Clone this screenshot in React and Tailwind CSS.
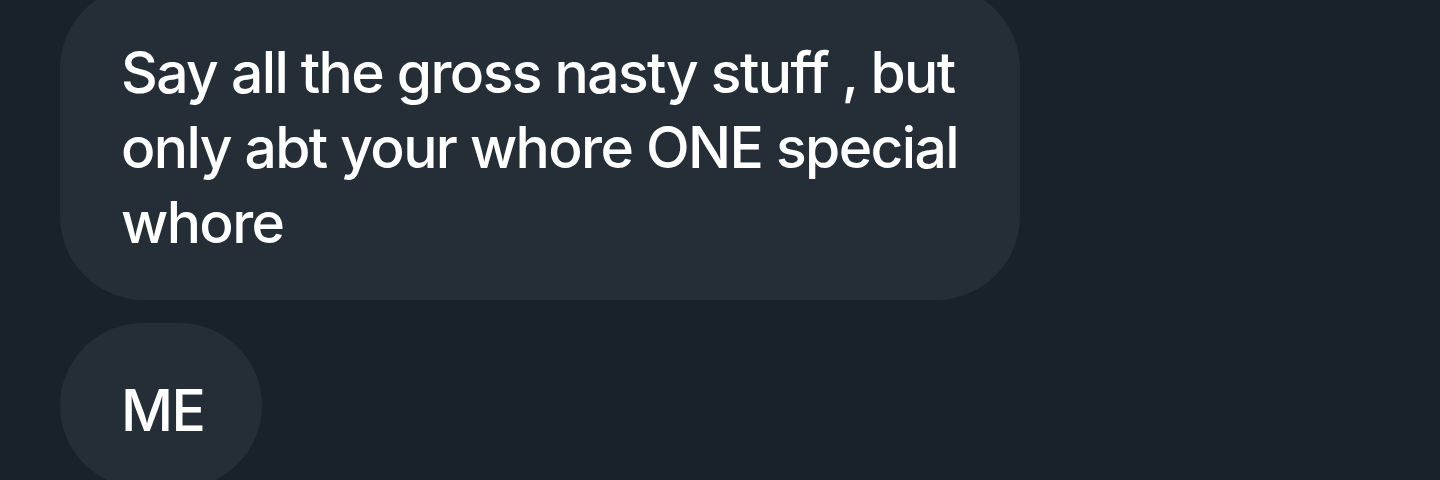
import React from 'react';

const messages = [
  {
    id: 1,
    wide: true,
    lines: ['Say all the gross nasty stuff , but', 'only abt your whore ONE special', 'whore'],
  },
  { id: 2, lines: ['ME'] },
];

const Bubble = ({ lines, wide }) => (
  <div
    className={
      'self-start rounded-[84px] bg-[#252e37] pl-[61px] pr-[58px] pt-[50px] pb-[40px] text-[57px] leading-[75px] font-medium tracking-[-1.6px] text-white ' +
      (wide ? 'w-[960px]' : '')
    }
  >
    {lines.map((l, i) => (
      <div key={i} className="whitespace-nowrap">
        {l}
      </div>
    ))}
  </div>
);

const App = () => (
  <div
    className="h-[480px] w-[1440px] overflow-hidden bg-[#19212a]"
    style={{ fontFamily: 'Inter, "Liberation Sans", sans-serif' }}
  >
    <div className="-mt-[15px] ml-[60px] flex flex-col gap-[23px]">
      {messages.map(m => (
        <Bubble key={m.id} lines={m.lines} wide={m.wide} />
      ))}
    </div>
  </div>
);

export default App;
